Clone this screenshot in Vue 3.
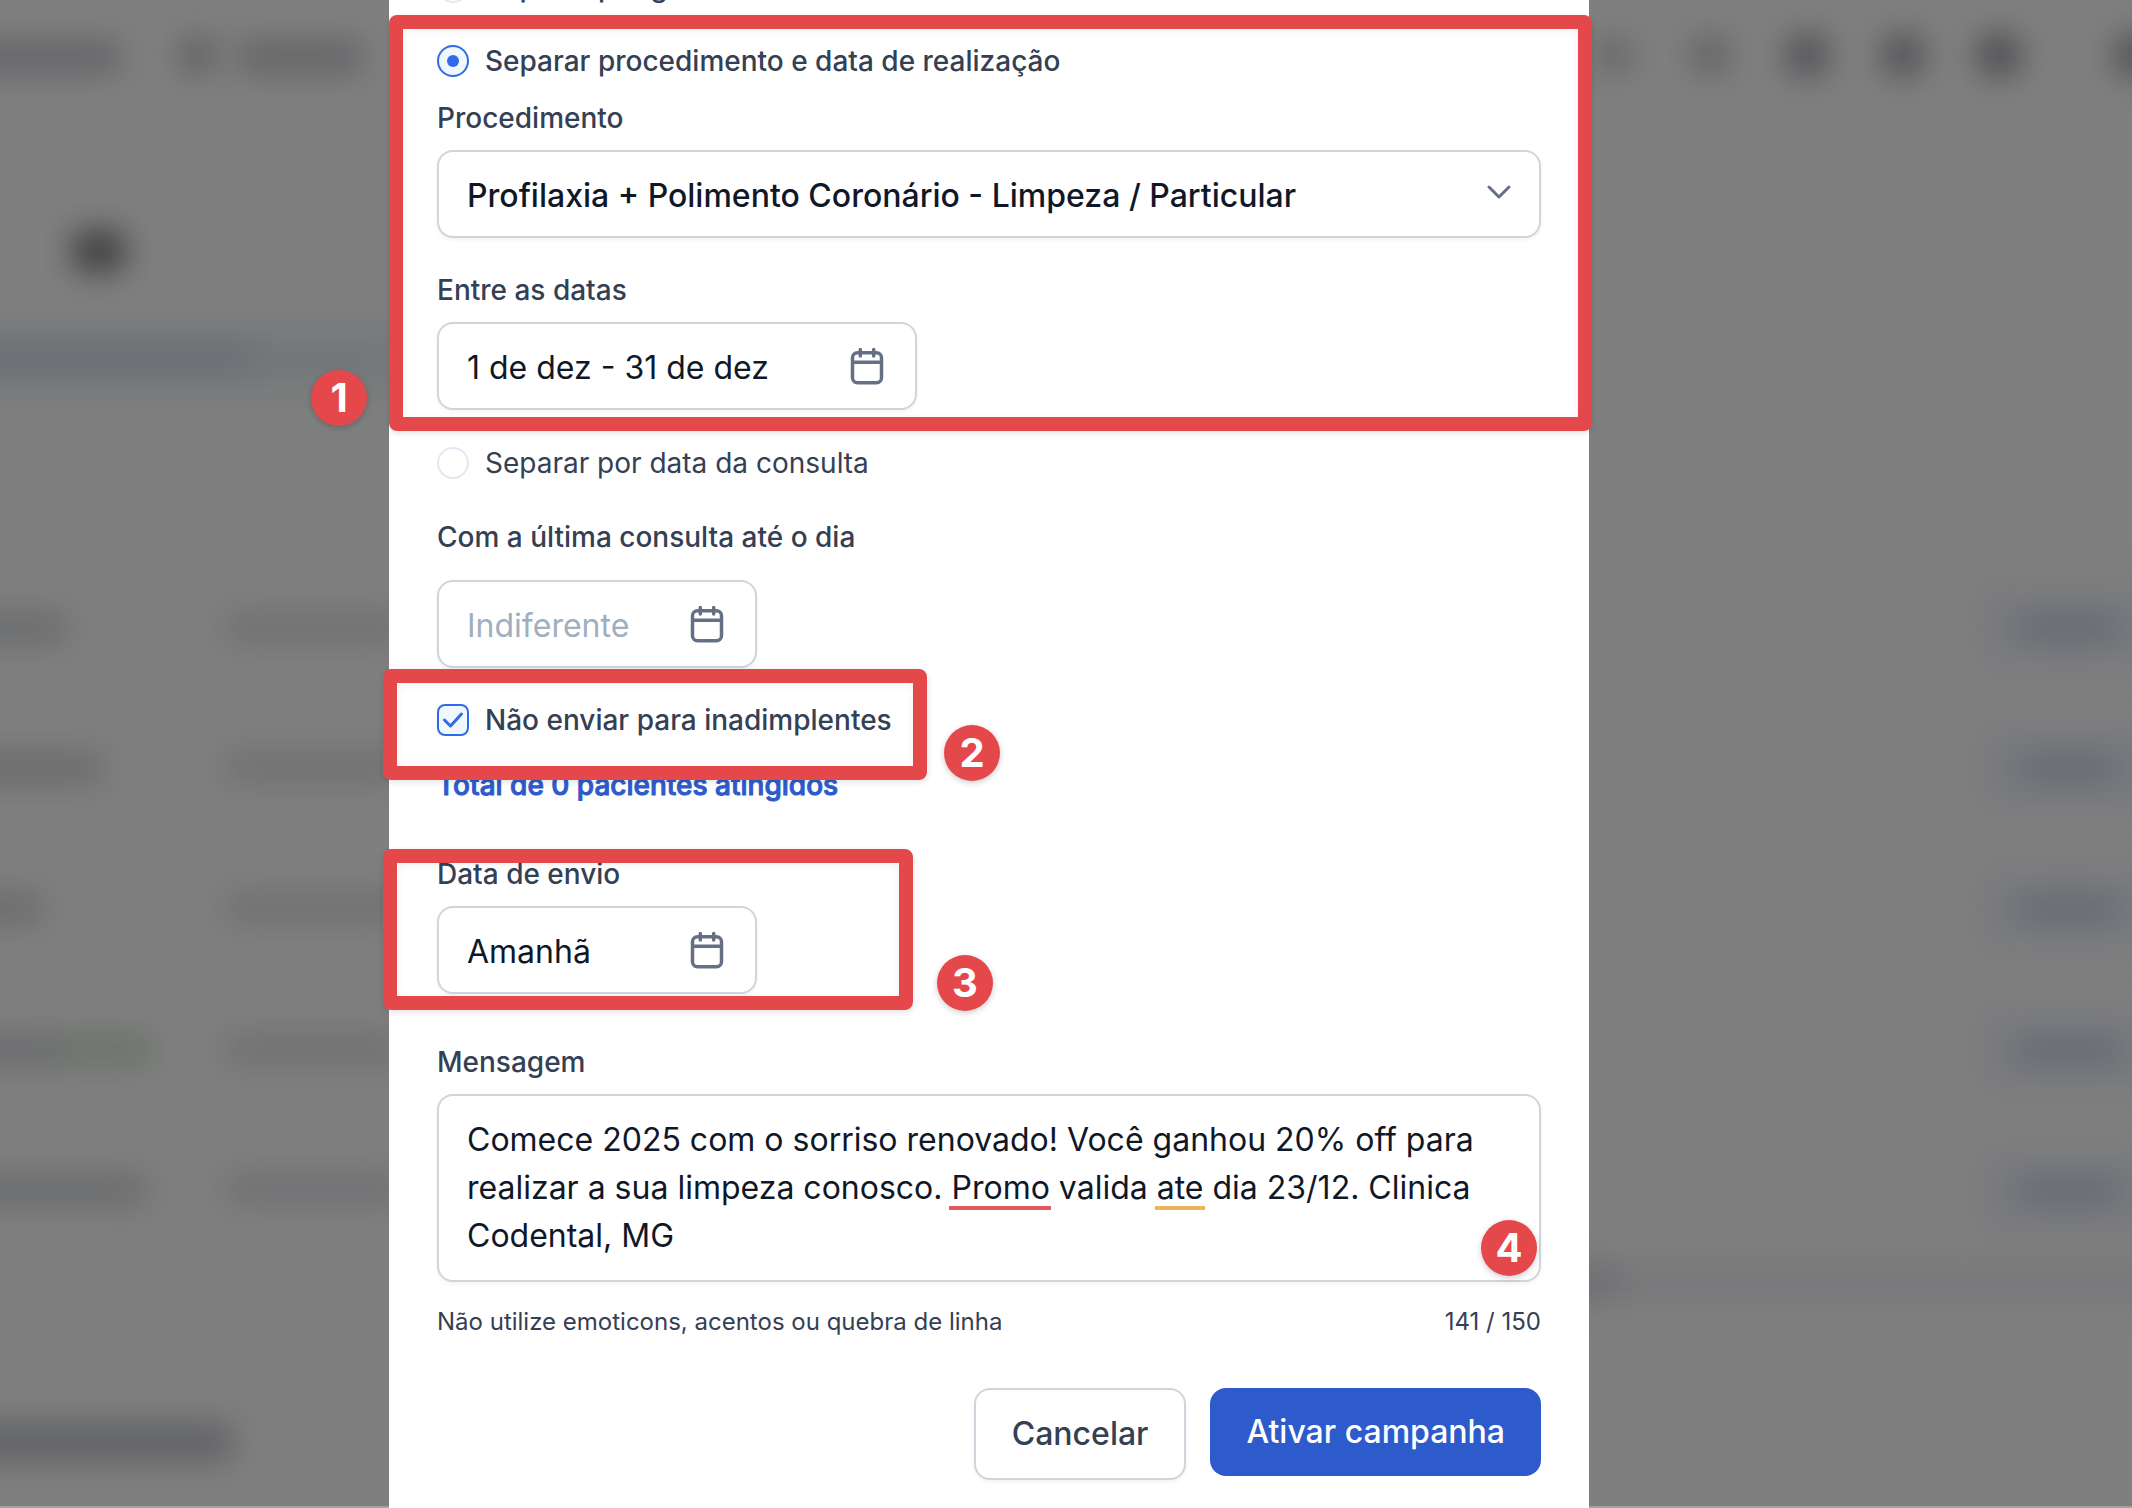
<template>
  <div class="screen">
    <!-- página desfocada atrás do modal -->
    <svg class="backdrop" viewBox="0 0 2132 1508" preserveAspectRatio="xMinYMin slice" aria-hidden="true">
      <defs>
        <filter
          id="blur"
          x="-300"
          y="-300"
          width="2900"
          height="2200"
          filterUnits="userSpaceOnUse"
          color-interpolation-filters="sRGB"
        >
          <feGaussianBlur stdDeviation="16" />
        </filter>
      </defs>
      <g filter="url(#blur)">
        <rect
          v-for="(b, i) in blobs"
          :key="i"
          :x="b[0]"
          :y="b[1]"
          :width="b[2]"
          :height="b[3]"
          :fill="b[4]"
        />
      </g>
      <rect x="-10" y="1506" width="2400" height="4" fill="#a0a3a2" />
    </svg>

    <form class="modal" @submit.prevent>
      <label class="choice">
        <input v-model="filter" type="radio" name="filter" value="genero" />
        <span>Separar por gênero e idade</span>
      </label>

      <section class="group procedure-group">
        <label class="choice">
          <input v-model="filter" type="radio" name="filter" value="procedimento" />
          <span>Separar procedimento e data de realização</span>
        </label>

        <label class="label label-procedure" for="procedure">Procedimento</label>
        <div class="field">
          <select id="procedure" v-model="procedure" class="control select">
            <option>Profilaxia + Polimento Coronário - Limpeza / Particular</option>
          </select>
          <svg class="chevron" viewBox="0 0 24 24"><path d="M2 5l10 10L22 5" /></svg>
        </div>

        <label class="label label-range" for="range">Entre as datas</label>
        <div class="field field-wide">
          <input id="range" v-model="range" class="control" type="text" />
          <svg class="calendar" viewBox="0 0 40 40"><path :d="calendarPath" stroke-width="3.5" /></svg>
        </div>

        <div class="mark mark-1"></div>
        <span class="badge badge-1">1</span>
      </section>

      <label class="choice choice-appointment">
        <input v-model="filter" type="radio" name="filter" value="consulta" />
        <span>Separar por data da consulta</span>
      </label>

      <label class="label label-last" for="last">Com a última consulta até o dia</label>
      <div class="field field-date field-last">
        <input id="last" v-model="lastVisit" class="control" type="text" placeholder="Indiferente" />
        <svg class="calendar" viewBox="0 0 40 40"><path :d="calendarPath" stroke-width="3.5" /></svg>
      </div>

      <div class="group debtors-group">
        <label class="choice">
          <input v-model="skipDebtors" type="checkbox" />
          <svg class="tick" viewBox="0 0 32 32"><path d="M7.5 16l6 6L24.5 10" /></svg>
          <span>Não enviar para inadimplentes</span>
        </label>
        <div class="mark mark-2"></div>
        <span class="badge badge-2">2</span>
      </div>

      <p class="total">Total de 0 pacientes atingidos</p>

      <div class="group send-group">
        <label class="label" for="send">Data de envio</label>
        <div class="field field-date">
          <input id="send" v-model="sendDate" class="control" type="text" />
          <svg class="calendar" viewBox="0 0 40 40"><path :d="calendarPath" stroke-width="3.5" /></svg>
        </div>
        <div class="mark mark-3"></div>
        <span class="badge badge-3">3</span>
      </div>

      <label class="label label-message" for="message">Mensagem</label>
      <div class="field">
        <textarea id="message" v-model="message" class="control message" rows="3" spellcheck="false"></textarea>
        <!-- sublinhados do corretor ortográfico -->
        <i class="spell spell-error"></i>
        <i class="spell spell-warning"></i>
        <span class="badge badge-4">4</span>
      </div>
      <div class="hint">
        <span>Não utilize emoticons, acentos ou quebra de linha</span>
        <span>141 / 150</span>
      </div>

      <footer class="actions">
        <button type="button" class="btn btn-outline">Cancelar</button>
        <button type="submit" class="btn btn-primary">Ativar campanha</button>
      </footer>
    </form>
  </div>
</template>

<script setup>
import { ref } from 'vue'

const filter = ref('procedimento')
const procedure = ref('Profilaxia + Polimento Coronário - Limpeza / Particular')
const range = ref('1 de dez - 31 de dez')
const lastVisit = ref('')
const skipDebtors = ref(true)
const sendDate = ref('Amanhã')
const message = ref(
  'Comece 2025 com o sorriso renovado! Você ganhou 20% off para realizar a sua limpeza conosco. Promo valida ate dia 23/12. Clinica Codental, MG'
)

const calendarPath =
  'M10.5 6.7h19a5 5 0 0 1 5 5v20a5 5 0 0 1-5 5h-19a5 5 0 0 1-5-5v-20a5 5 0 0 1 5-5zM5.5 16.3h29M13.3 3.5v6.5M26.7 3.5v6.5'

// x, y, largura, altura, cor
const blobs = [
  // cabeçalho
  [-40, 42, 160, 30, '#616265'],
  [182, 38, 30, 34, '#5c5c5c'],
  [238, 42, 124, 30, '#616264'],
  [1598, 40, 32, 30, '#626263'],
  [1693, 38, 34, 34, '#5f5f60'],
  [1788, 36, 38, 38, '#4d4e52'],
  [1884, 36, 38, 38, '#4e4f53'],
  [1980, 36, 38, 38, '#47484c'],
  [2116, 36, 60, 38, '#4e4f53'],
  // título e aviso
  [74, 232, 50, 38, '#3a3a3d'],
  [-60, 328, 460, 64, '#75787a'],
  [-60, 343, 312, 28, '#62697299'],
  // linhas da tabela
  [-60, 614, 126, 28, '#68696b'],
  [225, 614, 180, 26, '#6d6e70'],
  [-60, 754, 162, 28, '#68696b'],
  [225, 754, 180, 26, '#6d6e70'],
  [-60, 894, 102, 28, '#68696b'],
  [225, 894, 180, 26, '#6d6e70'],
  [-60, 1036, 120, 28, '#68696b'],
  [60, 1036, 92, 28, '#687267'],
  [225, 1036, 180, 26, '#6d6e70'],
  [-60, 1176, 206, 28, '#68696b'],
  [225, 1176, 180, 26, '#6d6e70'],
  [-60, 1424, 292, 36, '#5f6063'],
  // botões da tabela
  ...[627, 768, 909, 1050, 1191].flatMap((y) => [
    [1980, y - 38, 200, 76, '#797a7e'],
    [2018, y - 14, 100, 28, '#666a72']
  ]),
  // barra de rolagem
  [1560, 1267, 620, 30, '#767779'],
  [1570, 1268, 50, 28, '#696a6f']
]
</script>

<style>
body {
  margin: 0;
}
</style>

<style scoped>
.screen {
  position: relative;
  display: grid;
  grid-template-columns: 389fr 1200fr 543fr;
  min-height: 100vh;
  overflow: hidden;
  background: #7f7f7f;
  font-family: Inter, 'Liberation Sans', sans-serif;
  font-size: 28px;
  line-height: 40px;
  color: #344054;
}

.screen *,
.screen *::before {
  box-sizing: border-box;
}

.backdrop {
  position: absolute;
  inset: 0;
  width: 100%;
  height: 100%;
}

.modal {
  position: relative;
  grid-column: 2;
  display: flex;
  flex-direction: column;
  /* o conteúdo do modal está rolado */
  margin-top: -33px;
  padding: 0 48px 28px;
  background: #fff;
}

.group {
  position: relative;
}

.choice {
  position: relative;
  display: flex;
  align-items: center;
  gap: 16px;
  font-weight: 500;
}

.choice input {
  appearance: none;
  display: grid;
  place-items: center;
  flex: none;
  width: 32px;
  height: 32px;
  margin: 0;
  border: 2px solid #e2e8f0;
  border-radius: 50%;
  background: #fff;
}

.choice input[type='checkbox'] {
  border-radius: 8px;
}

.choice input:checked {
  border-color: #2f6be6;
  background: #eff8ff;
}

.choice input[type='radio']:checked::before {
  content: '';
  width: 12px;
  height: 12px;
  border-radius: 50%;
  background: #2f6be6;
}

.tick {
  position: absolute;
  top: 4px;
  left: 0;
  width: 32px;
  height: 32px;
  fill: none;
  stroke: #2f6be6;
  stroke-width: 3;
  stroke-linecap: round;
  stroke-linejoin: round;
}

input:not(:checked) + .tick {
  display: none;
}

.label {
  display: block;
  margin-bottom: 12px;
  font-weight: 500;
}

.procedure-group {
  margin-top: 34px;
}

.label-procedure {
  margin-top: 17px;
}

.label-range,
.debtors-group {
  margin-top: 32px;
}

.choice-appointment {
  margin-top: 33px;
  font-weight: 400;
}

.label-last {
  margin-top: 34px;
}

.field-last {
  margin-top: 11px;
}

.field {
  position: relative;
}

.field-wide {
  width: 480px;
}

.field-date {
  width: 320px;
}

.control {
  display: block;
  width: 100%;
  height: 88px;
  margin: 0;
  padding: 2px 28px 0;
  border: 2px solid #d0d5dd;
  border-radius: 16px;
  background: #fff;
  box-shadow: 0 2px 4px rgba(16, 24, 40, 0.05);
  color: #101828;
  font: inherit;
  font-size: 32px;
  line-height: 48px;
  outline: none;
}

.control::placeholder {
  color: #a0aec0;
  opacity: 1;
}

.select {
  appearance: none;
  padding-top: 4px;
  font-weight: 500;
}

.message {
  height: 188px;
  padding: 20px 28px;
  resize: none;
  overflow: hidden;
}

.chevron,
.calendar {
  position: absolute;
  right: 30px;
  fill: none;
  stroke: #667085;
  stroke-linecap: round;
  stroke-linejoin: round;
  pointer-events: none;
}

.chevron {
  top: 32px;
  width: 24px;
  height: 24px;
  stroke-width: 3;
}

.calendar {
  top: 24px;
  width: 40px;
  height: 40px;
}

.total {
  margin: 25px 0 0;
  color: #2d5bcb;
  font-weight: 500;
  -webkit-text-stroke: 1px #2d5bcb;
}

.send-group {
  width: 320px;
  margin-top: 49px;
}

.label-message {
  margin-top: 48px;
}

.hint {
  display: flex;
  justify-content: space-between;
  margin-top: 22px;
  font-size: 24px;
  line-height: 36px;
}

.actions {
  display: flex;
  justify-content: flex-end;
  align-items: flex-start;
  gap: 24px;
  margin-top: 48px;
}

.btn {
  padding: 20px 36px;
  border: 0;
  border-radius: 16px;
  font: inherit;
  font-size: 32px;
  font-weight: 500;
  line-height: 48px;
}

.btn-outline {
  border: 2px solid #d0d5dd;
  background: #fff;
  box-shadow: 0 2px 4px rgba(16, 24, 40, 0.05);
  color: #344054;
}

.btn-primary {
  background: #2d5bcb;
  color: #fff;
}

.spell {
  position: absolute;
  top: 112px;
  height: 4px;
}

.spell-error {
  left: 512px;
  width: 102px;
  background: #de5e5c;
}

.spell-warning {
  left: 718px;
  width: 50px;
  background: #e9b45a;
}

/* marcações do tutorial */
.mark {
  position: absolute;
  z-index: 1;
  border: 14px solid #e5484b;
  border-radius: 8px;
  box-shadow: 0 2px 6px rgba(0, 0, 0, 0.12), inset 0 2px 8px rgba(0, 0, 0, 0.06);
  pointer-events: none;
}

.mark-1 {
  inset: -26px -51px -21px -48px;
}

.mark-2 {
  top: -31px;
  left: -54px;
  width: 544px;
  height: 111px;
}

.mark-3 {
  top: -5px;
  left: -54px;
  width: 530px;
  height: 161px;
}

.badge {
  position: absolute;
  z-index: 1;
  width: 56px;
  height: 56px;
  border-radius: 50%;
  background: #e5484b;
  box-shadow: 0 2px 6px rgba(0, 0, 0, 0.2);
  color: #fff;
  font-size: 40px;
  font-weight: 700;
  line-height: 56px;
  text-align: center;
}

.badge-1 {
  top: 329px;
  left: -126px;
}

.badge-2 {
  top: 25px;
  left: 507px;
}

.badge-3 {
  top: 101px;
  left: 500px;
}

.badge-4 {
  right: 4px;
  bottom: 6px;
}
</style>
